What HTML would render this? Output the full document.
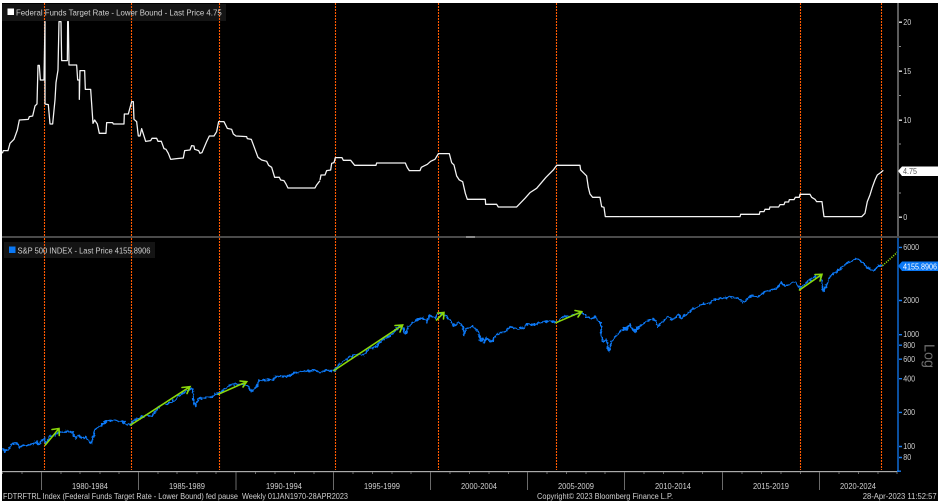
<!DOCTYPE html>
<html><head><meta charset="utf-8"><style>
html,body{margin:0;padding:0;background:#fff;width:940px;height:502px;overflow:hidden}
svg{display:block;position:absolute;left:0;top:0;filter:blur(.3px)}
text{font-family:"Liberation Sans",sans-serif;font-size:8.6px;fill:#cfcfcf}
</style></head><body>
<svg width="940" height="502" viewBox="0 0 940 502">
<defs>
<filter id="jit" filterUnits="userSpaceOnUse" x="0" y="238" width="900" height="234">
<feTurbulence type="fractalNoise" baseFrequency=".35" numOctaves="2" seed="4" result="n"/>
<feDisplacementMap in="SourceGraphic" in2="n" scale="4" xChannelSelector="R" yChannelSelector="G"/>
</filter>
</defs>
<rect x="2" y="3" width="936" height="498" fill="#000"/>
<!-- legends -->
<rect x="2" y="4" width="224" height="17" fill="#141414"/>
<rect x="4" y="242" width="151" height="16" fill="#141414"/>
<!-- panel separators -->
<rect x="2" y="236" width="936" height="2" fill="#4a4a4a"/>
<rect x="466" y="236" width="9" height="2" fill="#8a8a8a"/>
<!-- orange dotted -->
<g stroke="#ff5a00" stroke-width="1.100" stroke-dasharray="2 1" fill="none">
<path d="M44.500 3V236M131.500 3V236M219.500 3V236M335.500 3V236M438.500 3V236M556.500 3V236M800.500 3V236M881.500 3V236"/>
<path d="M44.500 238V470M131.500 238V470M219.500 238V470M335.500 238V470M438.500 238V470M556.500 238V470M800.500 238V470M881.500 238V470"/>
</g>
<!-- fed funds -->
<g fill="none" stroke="#f4f4f4" stroke-width="3.800" stroke-linejoin="round">
<polyline transform="scale(.3333)" points="7,460 10,452 24,452 30,430 42,418 52,390 58,360 85,358 88,350 98,348 105,318 111,312 114,196 118,196 121,240 132,240 135,65 135,312 145,314 150,372 158,372 165,300 168,248 174,210 177,65 183,65 185,182 202,182 203,65 205,65 207,195 230,195 233,240 238,240 238,298 240,212 254,212 256,268 272,268 279,370 284,360 292,372 298,400 318,400 320,368 338,368 340,372 372,372 373,342 385,342 395,305 400,305 402,358 410,365 415,408 420,408 425,386 431,405 437,424 452,422 456,415 470,415 474,424 484,424 492,446 498,448 505,460 512,478 530,476 550,474 554,452 570,450 575,437 582,438 584,448 596,452 600,460 606,458 620,425 628,408 642,408 650,395 656,365 672,365 682,385 695,388 700,402 708,408 740,410 742,416 754,418 764,445 774,472 785,480 800,484 806,496 815,502 824,532 838,532 842,540 852,542 858,552 864,564 945,564 950,555 960,542"/>
<polyline transform="translate(320 0) scale(.3333)" points="0,540 3,525 15,525 20,512 32,510 35,490 42,488 46,473 66,473 70,481 92,481 104,496 168,496 170,489 256,489 262,503 268,512 300,512 304,502 312,498 322,493 332,484 345,478 355,461 388,461 395,488 402,495 410,528 418,540 428,545 436,580 442,598 496,598 497,613 530,613 535,621 590,621 615,595 630,578 650,565 678,532 700,510 710,496 780,496 782,510 800,528 805,562 810,582 818,592 840,592 845,620 852,622 856,650 900,650"/>
<polyline transform="translate(620 0) scale(.3333)" points="0,650 360,650 362,643 418,643 420,635 432,635 435,628 448,628 450,621 476,621 480,614 492,614 495,606 506,606 508,599 522,599 526,592 538,592 540,583 570,583 575,592 585,598 590,605 606,605 612,650 725,650 735,640 742,605 750,585 757,562 765,540 772,525 782,518 790,511"/>
</g>
<!-- spx -->
<g fill="none" stroke="#0a78f5" stroke-width="4.800" stroke-linejoin="round" filter="url(#jit)">
<polyline transform="translate(0 235) scale(.3333)" points="7,640 15,650 25,642 40,625 50,624 58,638 70,630 80,632 90,628 100,628 110,618 115,628 125,620 132,607 136,625 150,605 165,600 178,590 190,592 205,588 218,592 225,610 235,600 245,610 258,606 268,620 275,625 285,582 295,578 305,570 320,558 345,556 365,560 380,566 392,570 400,556 420,550 435,540 455,543 470,525 490,505 510,505 525,495 540,480 555,470 570,462 578,460 580,495 585,515 595,490 610,492 620,485 630,488 645,480 655,475 670,465 690,450 710,448 730,448 745,455 755,470 770,455 775,437 800,435 820,435 825,425 870,423 880,415 920,408 945,405 960,413"/>
<polyline transform="translate(320 235) scale(.3333)" points="0,412 20,406 42,408 60,385 100,360 130,360 150,340 170,335 185,315 215,300 235,275 250,280 255,298 265,275 290,255 310,250 320,260 330,240 345,250 355,235 375,240 395,262 405,275 415,262 430,275 432,300 440,280 460,275 475,290 482,318 490,310 492,325 500,308 515,322 530,298 560,288 570,275 590,282 610,280 620,268 640,270 660,263 690,258 710,262 730,245 760,240 785,232 800,245 815,250 825,245 842,265 844,305 850,320 860,315 866,350 875,320 885,305 905,285 920,282 930,268 940,288 960,272"/>
<polyline transform="translate(620 235) scale(.3333)" points="0,288 30,270 45,290 70,265 90,252 105,255 115,275 125,262 145,245 155,255 175,240 185,250 215,225 245,208 270,205 280,195 330,185 355,190 370,202 395,182 415,185 435,170 470,160 485,143 495,155 525,140 540,160 575,130 600,118 610,170 630,125 650,110 680,85 710,70 725,80 745,100 760,108 775,92 787,92"/>
</g>
<!-- green arrows -->
<g fill="none" stroke="#8ad80a" stroke-width="1.600" stroke-linecap="round">
<path d="M45.300 445L59 428.500M52 429.500L59 428.500L59.300 435.500"/>
<path d="M130.700 425L190 386.700M182 387.500L190 386.700L187 393.500"/>
<path d="M218.300 394.300L246.700 381.700M240 381L246.700 381.700L243 387"/>
<path d="M334 370.500L402.700 325M395 325.500L402.700 325L400 332"/>
<path d="M436.500 320L444 312.500M437.500 313L444 312.500L443.500 319"/>
<path d="M556 322.700L581.700 311.700M575 310.500L581.700 311.700L578 317"/>
<path d="M799.500 290L822 274.300M815 274.500L822 274.300L820 281"/>
<path d="M882.500 265.700L898 251.700" stroke-dasharray="1.200 1.200" stroke-linecap="butt"/>
</g>
<!-- legend text -->
<rect x="7.500" y="8.500" width="6.500" height="6.500" fill="#fff"/>
<text x="16" y="15.500" textLength="205.700" lengthAdjust="spacingAndGlyphs">Federal Funds Target Rate - Lower Bound - Last Price 4.75</text>
<rect x="9" y="246.500" width="6.500" height="6.500" fill="#0a78f5"/>
<text x="17.500" y="253.500" textLength="133" lengthAdjust="spacingAndGlyphs">S&amp;P 500 INDEX - Last Price 4155.8906</text>
<!-- right axes -->
<rect x="897" y="3" width="2" height="233" fill="#5c5c5c"/>
<rect x="897" y="238" width="2" height="234" fill="#0b4f9e"/>
<g fill="#dddddd">
<rect x="899" y="21.500" width="3" height="1.400"/><rect x="899" y="70.500" width="3" height="1.400"/><rect x="899" y="119.500" width="3" height="1.400"/><rect x="899" y="216.500" width="3" height="1.400"/>
<rect x="899" y="46" width="2" height="1" fill="#888"/><rect x="899" y="95" width="2" height="1" fill="#888"/><rect x="899" y="143.500" width="2" height="1" fill="#888"/><rect x="899" y="192.500" width="2" height="1" fill="#888"/>
</g>
<text x="903.300" y="25" textLength="7.900" lengthAdjust="spacingAndGlyphs">20</text><text x="903.300" y="74" textLength="7.900" lengthAdjust="spacingAndGlyphs">15</text><text x="903.300" y="123" textLength="7.900" lengthAdjust="spacingAndGlyphs">10</text><text x="903.300" y="220" textLength="4" lengthAdjust="spacingAndGlyphs">0</text>
<path d="M898 171L902 166.500H938V176H902Z" fill="#ffffff"/>
<text x="903" y="174.200" textLength="14" lengthAdjust="spacingAndGlyphs" style="fill:#555">4.75</text>
<g fill="#1a7cf0">
<path d="M899 246.700h3v1.400h-3zM899 299.800h3v1.400h-3zM899 334h3v1.400h-3zM899 344.500h3v1.400h-3zM899 358.500h3v1.400h-3zM899 378h3v1.400h-3zM899 411.700h3v1.400h-3zM899 445.800h3v1.400h-3zM899 456.800h3v1.400h-3zM897 470.500h4v1.400h-4z"/>
</g>
<g>
<text x="903.300" y="249.800" textLength="15.700" lengthAdjust="spacingAndGlyphs">6000</text><text x="903.300" y="303" textLength="15.700" lengthAdjust="spacingAndGlyphs">2000</text><text x="903.300" y="337.200" textLength="15.700" lengthAdjust="spacingAndGlyphs">1000</text><text x="903.300" y="348" textLength="11.800" lengthAdjust="spacingAndGlyphs">800</text><text x="903.300" y="362" textLength="11.800" lengthAdjust="spacingAndGlyphs">600</text><text x="903.300" y="381.500" textLength="11.800" lengthAdjust="spacingAndGlyphs">400</text><text x="903.300" y="415" textLength="11.800" lengthAdjust="spacingAndGlyphs">200</text><text x="903.300" y="449" textLength="11.800" lengthAdjust="spacingAndGlyphs">100</text><text x="903.300" y="460" textLength="7.900" lengthAdjust="spacingAndGlyphs">80</text>
</g>
<path d="M898 266L902 261.500H938V271H902Z" fill="#0a78f5"/>
<text x="903" y="269.300" textLength="34" lengthAdjust="spacingAndGlyphs" style="fill:#fff">4155.8906</text>
<text transform="translate(924.500 344) rotate(90)" textLength="24" lengthAdjust="spacingAndGlyphs" style="font-size:15px;fill:#6e6e6e">Log</text>
<!-- bottom axis -->
<rect x="2" y="471" width="895" height="1.200" fill="#aaaaaa"/>
<g stroke="#6a6a6a" stroke-width="1" fill="none">
<path d="M41.500 472V490M138.500 472V490M236 472V490M333.500 472V490M430.500 472V490M527.500 472V490M624.500 472V490M722.500 472V490M819.500 472V490"/>
<path d="M2.500 472v2M22 472v2M61 472v2M80 472v2M100 472v2M119 472v2M158 472v2M177 472v2M197 472v2M216 472v2M255.500 472v2M275 472v2M294.500 472v2M314 472v2M353 472v2M372.500 472v2M392 472v2M411 472v2M450 472v2M469.500 472v2M489 472v2M508.500 472v2M547 472v2M566.500 472v2M586 472v2M605 472v2M644 472v2M663.500 472v2M683 472v2M702.500 472v2M742 472v2M761.500 472v2M781 472v2M800.500 472v2M839 472v2M858.500 472v2M878 472v2M897 472v2"/>
</g>
<g>
<text x="72" y="489" textLength="36" lengthAdjust="spacingAndGlyphs">1980-1984</text><text x="169" y="489" textLength="36" lengthAdjust="spacingAndGlyphs">1985-1989</text><text x="266" y="489" textLength="36" lengthAdjust="spacingAndGlyphs">1990-1994</text><text x="364" y="489" textLength="36" lengthAdjust="spacingAndGlyphs">1995-1999</text><text x="461" y="489" textLength="36" lengthAdjust="spacingAndGlyphs">2000-2004</text><text x="558" y="489" textLength="36" lengthAdjust="spacingAndGlyphs">2005-2009</text><text x="655" y="489" textLength="36" lengthAdjust="spacingAndGlyphs">2010-2014</text><text x="753" y="489" textLength="36" lengthAdjust="spacingAndGlyphs">2015-2019</text><text x="840" y="489" textLength="36" lengthAdjust="spacingAndGlyphs">2020-2024</text>
</g>
<text x="3" y="499" xml:space="preserve" textLength="345" lengthAdjust="spacingAndGlyphs">FDTRFTRL Index (Federal Funds Target Rate - Lower Bound) fed pause  Weekly 01JAN1970-28APR2023</text>
<text x="537" y="499" textLength="136" lengthAdjust="spacingAndGlyphs">Copyright© 2023 Bloomberg Finance L.P.</text>
<text x="862.700" y="499" textLength="74" lengthAdjust="spacingAndGlyphs">28-Apr-2023 11:52:57</text>
</svg>
</body></html>
